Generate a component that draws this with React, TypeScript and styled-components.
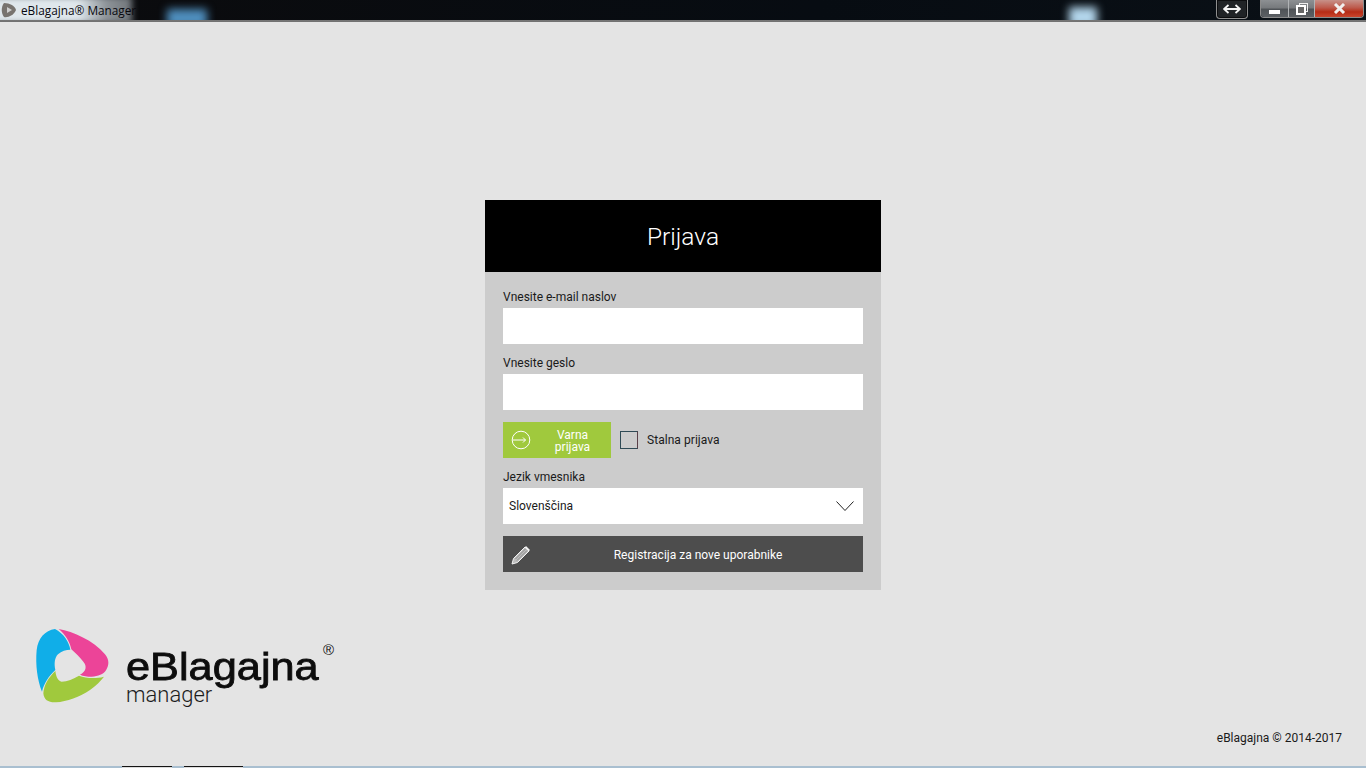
import React from "react";
import styled, { createGlobalStyle } from "styled-components";

const Global = createGlobalStyle`
  html, body { margin: 0; padding: 0; height: 100%; overflow: hidden; }
  body { background: #e4e4e4; font-family: Roboto, "Liberation Sans", sans-serif; }
  * { box-sizing: border-box; }
`;

const Page = styled.div`
  width: 1366px;
  height: 768px;
  display: flex;
  flex-direction: column;
  overflow: hidden;
  background: #e4e4e4;
`;

const TitleBar = styled.header`
  position: relative;
  height: 22px;
  flex: none;
  display: flex;
  align-items: flex-start;
  justify-content: space-between;
  overflow: hidden;
  background: linear-gradient(90deg, #0b0b0d 0%, #070c12 60%, #0a1016 100%);
  border-bottom: 2px solid;
  border-image: linear-gradient(180deg, #f2f2f2 0%, #707070 100%) 1;
`;

const Glow = styled.span<{ $x: number; $w: number; $h: number; $top: number; $color: string; $blur: number }>`
  position: absolute;
  left: ${p => p.$x}px;
  top: ${p => p.$top}px;
  width: ${p => p.$w}px;
  height: ${p => p.$h}px;
  background: ${p => p.$color};
  filter: blur(${p => p.$blur}px);
`;

const TitleLeft = styled.div`
  position: relative;
  display: flex;
  align-items: center;
  height: 20px;
  padding-left: 1px;
  gap: 4px;
`;

const TitleText = styled.span`
  font-family: "Open Sans", "Noto Sans", sans-serif;
  font-size: 11.8px;
  color: #08080e;
  white-space: nowrap;
`;

const WindowControls = styled.div`
  position: relative;
  display: flex;
  align-items: flex-start;
  padding-right: 2px;
`;

const ResizeButton = styled.div`
  width: 32px;
  height: 19px;
  margin-right: 12px;
  border: 1px solid #8f8f8f;
  border-top: none;
  border-radius: 0 0 4px 4px;
  background: #202326;
  box-shadow: inset 0 0 0 1px #0c0d0f;
  display: flex;
  align-items: center;
  justify-content: center;
`;

const CaptionGroup = styled.div`
  display: flex;
  height: 18px;
  border: 1px solid #8c8c8c;
  border-top: none;
  border-radius: 0 0 4px 4px;
  overflow: hidden;
`;

const CaptionButton = styled.div<{ $w: number; $close?: boolean }>`
  width: ${p => p.$w}px;
  display: flex;
  align-items: center;
  justify-content: center;
  border-right: ${p => (p.$close ? "none" : "1px solid #b0b3b5")};
  background: ${p =>
    p.$close
      ? "linear-gradient(180deg, #c79189 0%, #bd5a4c 45%, #b52c16 70%, #c9452d 100%)"
      : "linear-gradient(180deg, #8d9093 0%, #777a7d 45%, #4f5357 55%, #5c6064 100%)"};
`;

const Main = styled.main`
  flex: 1;
  display: flex;
  flex-direction: column;
  min-height: 0;
`;

const CardArea = styled.div`
  display: flex;
  justify-content: center;
  padding-top: 178px;
`;

const Card = styled.section`
  width: 396px;
  background: #cccccc;
`;

const CardHeader = styled.h1`
  margin: 0;
  height: 72px;
  background: #000;
  color: #fff;
  font-size: 24.5px;
  font-weight: 300;
  line-height: 73px;
  text-align: center;
`;

const CardBody = styled.div`
  padding: 18px;
  display: flex;
  flex-direction: column;
`;

const Label = styled.label`
  display: block;
  height: 18px;
  font-size: 12px;
  line-height: 14px;
  color: #1a1a1a;
`;

const TextInput = styled.div`
  height: 36px;
  background: #fff;
  margin-bottom: 12px;
`;

const ActionRow = styled.div`
  display: flex;
  align-items: center;
  height: 36px;
  margin-bottom: 12px;
`;

const SecureButton = styled.button`
  width: 108px;
  height: 36px;
  border: 0;
  padding: 0 0 0 8px;
  background: #a0c93d;
  display: flex;
  align-items: center;
  color: #fff;
  font-family: inherit;
`;

const SecureLabel = styled.span`
  flex: 1;
  font-size: 12px;
  line-height: 12px;
  text-align: center;
  padding: 2px 13px 0 16px;
`;

const Check = styled.span`
  width: 18px;
  height: 18px;
  margin-left: 9px;
  margin-right: 9px;
  border: 1px solid #2f4a55;
  border-right-color: #5a4048;
  flex: none;
`;

const CheckLabel = styled.span`
  font-size: 12px;
  color: #1a1a1a;
  letter-spacing: 0.05px;
`;

const SelectBox = styled.div`
  height: 36px;
  background: #fff;
  margin-bottom: 12px;
  padding: 0 9px 0 6px;
  display: flex;
  align-items: center;
  justify-content: space-between;
  font-size: 12px;
  color: #1a1a1a;
`;

const RegisterButton = styled.button`
  height: 36px;
  border: 0;
  padding: 1px 0 0 8px;
  background: #4d4d4d;
  color: #fff;
  display: flex;
  align-items: center;
  font-family: inherit;
`;

const RegisterLabel = styled.span`
  flex: 1;
  text-align: center;
  font-size: 12px;
  padding-left: 2px;
`;

const BottomRow = styled.div`
  flex: 1;
  display: flex;
  justify-content: space-between;
  align-items: flex-end;
  padding: 0 24px 21px 30px;
`;

const Logo = styled.div`
  display: flex;
  align-items: flex-start;
  gap: 11px;
  margin-bottom: 35px;
`;

const Brand = styled.div`
  position: relative;
  padding-top: 25px;
  width: 215px;
`;

const BrandName = styled.div`
  font-family: "Liberation Sans", Arial, sans-serif;
  font-size: 38px;
  line-height: 34px;
  height: 34px;
  color: #0d0d0d;
  -webkit-text-stroke: 0.8px #0d0d0d;
  transform: scaleX(1.14);
  transform-origin: left center;
`;

const BrandSub = styled.div`
  font-family: Roboto, "Liberation Sans", sans-serif;
  font-size: 22px;
  font-weight: 300;
  line-height: 21px;
  color: #1c1c1c;
`;

const Registered = styled.span`
  position: absolute;
  left: 197px;
  top: 17px;
  font-family: "Liberation Sans", Arial, sans-serif;
  font-size: 15px;
  line-height: 16px;
  color: #111;
`;

const Copyright = styled.div`
  font-size: 12px;
  line-height: 14px;
  color: #1a1a1a;
`;

const TaskStrip = styled.footer`
  height: 2px;
  flex: none;
  display: flex;
  background: #a9bfd0;
  padding-left: 122px;
  gap: 12px;
`;

const TaskItem = styled.span<{ $w: number }>`
  width: ${p => p.$w}px;
  height: 2px;
  background: #dcdcdc;
  border-top: 1px solid #141414;
`;

const App: React.FC = () => (
  <Page>
    <Global />
    <TitleBar>
      <Glow $x={-10} $w={142} $h={28} $top={-4} $color="linear-gradient(90deg, #dfe7ec 0%, #dfe7ec 62%, #8d9398 82%, #70757a 100%)" $blur={3} />
      <Glow $x={167} $w={40} $h={18} $top={9} $color="#4f8fbf" $blur={4} />
      <Glow $x={1069} $w={28} $h={20} $top={7} $color="#b3d6ec" $blur={4} />
      <TitleLeft>
        <svg width="16" height="16" viewBox="0 0 16 16">
          <path d="M3 1 C9 1 14 4 15 8 C13 13 7 16 3 15 C0 11 0 5 3 1Z" fill="#77736f" />
          <path d="M6 5 L11 8 L6 11Z" fill="#cfcfcf" />
        </svg>
        <TitleText>eBlagajna® Manager</TitleText>
      </TitleLeft>
      <WindowControls>
        <ResizeButton>
          <svg width="18" height="10" viewBox="0 0 18 10">
            <path d="M2 5H16" stroke="#f4f4f4" strokeWidth="2" />
            <path d="M5.5 1L1 5L5.5 9M12.5 1L17 5L12.5 9" fill="none" stroke="#f4f4f4" strokeWidth="1.8" />
          </svg>
        </ResizeButton>
        <CaptionGroup>
          <CaptionButton $w={28}>
            <svg width="11" height="4" viewBox="0 0 11 4" style={{ marginTop: 6 }}>
              <rect width="11" height="4" fill="#fff" />
            </svg>
          </CaptionButton>
          <CaptionButton $w={26}>
            <svg width="12" height="12" viewBox="0 0 12 12">
              <rect x="3.5" y="0.5" width="8" height="8" fill="none" stroke="#eee" />
              <rect x="1" y="3" width="8" height="8" fill="#666" stroke="#fff" strokeWidth="2" />
            </svg>
          </CaptionButton>
          <CaptionButton $w={48} $close>
            <svg width="13" height="11" viewBox="0 0 13 11">
              <path d="M2 1L11 10M11 1L2 10" stroke="#f1efee" strokeWidth="3" />
            </svg>
          </CaptionButton>
        </CaptionGroup>
      </WindowControls>
    </TitleBar>
    <Main>
      <CardArea>
        <Card>
          <CardHeader>Prijava</CardHeader>
          <CardBody>
            <Label>Vnesite e-mail naslov</Label>
            <TextInput />
            <Label>Vnesite geslo</Label>
            <TextInput />
            <ActionRow>
              <SecureButton>
                <svg width="20" height="20" viewBox="0 0 20 20">
                  <circle cx="10" cy="10" r="8.8" fill="none" stroke="#fff" strokeWidth="1" />
                  <path d="M2 10H14.5M12 7.5L14.5 10L12 12.5" fill="none" stroke="#fff" strokeWidth="1" />
                </svg>
                <SecureLabel>Varna prijava</SecureLabel>
              </SecureButton>
              <Check />
              <CheckLabel>Stalna prijava</CheckLabel>
            </ActionRow>
            <Label>Jezik vmesnika</Label>
            <SelectBox>
              <span>Slovenščina</span>
              <svg width="18" height="10" viewBox="0 0 18 10">
                <path d="M0.5 0.5L9 9.5L17.5 0.5" fill="none" stroke="#222" strokeWidth="1" />
              </svg>
            </SelectBox>
            <RegisterButton>
              <svg width="20" height="20" viewBox="0 0 20 20">
                <path d="M1 19L2.5 13.5L14 2L18 6L6.5 17.5Z" fill="#bdbdbd" stroke="#f2f2f2" strokeWidth="1" />
                <path d="M4.5 14L14.5 4M6 15.5L16 5.5" stroke="#8a8a8a" strokeWidth="1" />
                <path d="M15 1L19 5L17.8 6.2L13.8 2.2Z" fill="#f4f4f4" />
              </svg>
              <RegisterLabel>Registracija za nove uporabnike</RegisterLabel>
            </RegisterButton>
          </CardBody>
        </Card>
      </CardArea>
      <BottomRow>
        <Logo>
          <svg width="85" height="85" viewBox="0 0 255 255">
            <path d="M75 12 C45 16 24 40 20 75 C16 120 22 165 36 200 C42 175 55 155 76 135 C72 115 74 98 84 88 C95 78 108 74 121 74 C118 52 100 24 75 12Z" fill="#10aee8" />
            <path d="M86 12 C130 20 190 46 225 88 C238 104 238 120 228 136 C220 148 205 154 185 155 C172 155 160 153 150 149 C168 140 172 124 160 110 C150 98 137 84 124 73 C120 50 105 28 86 12Z" fill="#ec4498" />
            <path d="M40 205 C42 225 55 233 78 232 C110 230 150 216 180 195 C198 182 212 168 222 155 C195 162 168 160 147 152 C130 162 112 170 95 170 C84 168 78 155 76 138 C55 158 42 180 40 205Z" fill="#a0c93d" />
          </svg>
          <Brand>
            <BrandName>eBlagajna</BrandName>
            <BrandSub>manager</BrandSub>
            <Registered>®</Registered>
          </Brand>
        </Logo>
        <Copyright>eBlagajna © 2014-2017</Copyright>
      </BottomRow>
    </Main>
    <TaskStrip>
      <TaskItem $w={50} />
      <TaskItem $w={59} />
    </TaskStrip>
  </Page>
);

export default App;
